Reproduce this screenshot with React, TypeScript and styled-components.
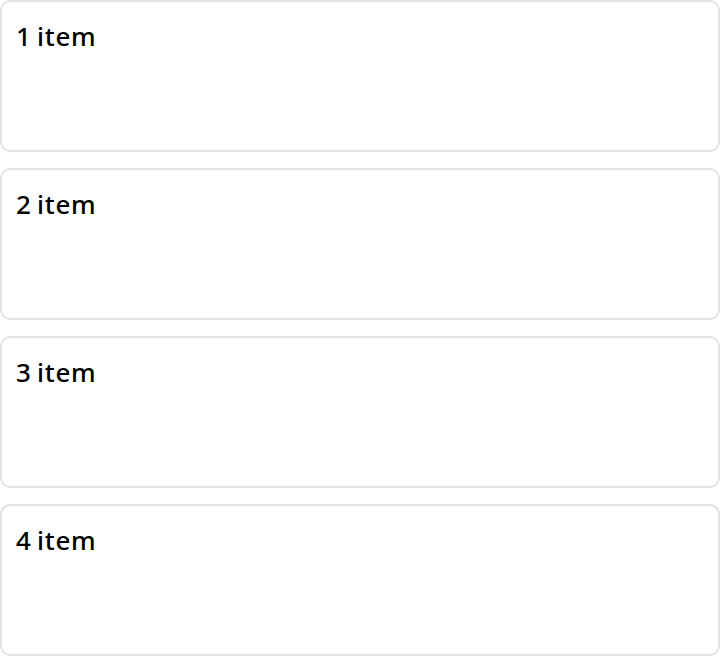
import React from 'react'
import styled, { createGlobalStyle } from 'styled-components'

const GlobalStyle = createGlobalStyle`
  body {
    margin: 0;
    background: #fff;
    font-family: "Noto Sans", "Open Sans", sans-serif;
  }
`

const List = styled.div`
  display: flex;
  flex-direction: column;
  gap: 16px;
`

const Card = styled.div`
  box-sizing: border-box;
  height: 152px;
  padding: 16px 14px;
  border: 2px solid #e3e3e3;
  border-radius: 10px;
  background: #fff;
`

const Title = styled.p`
  margin: 0;
  font-size: 26px;
  font-weight: 500;
  line-height: 36px;
  letter-spacing: 0.7px;
  word-spacing: -2px;
  color: #000;
`

const items = [1, 2, 3, 4]

export default function App() {
  return (
    <>
      <GlobalStyle />
      <List>
        {items.map((n) => (
          <Card key={n}>
            <Title>{n} item</Title>
          </Card>
        ))}
      </List>
    </>
  )
}
